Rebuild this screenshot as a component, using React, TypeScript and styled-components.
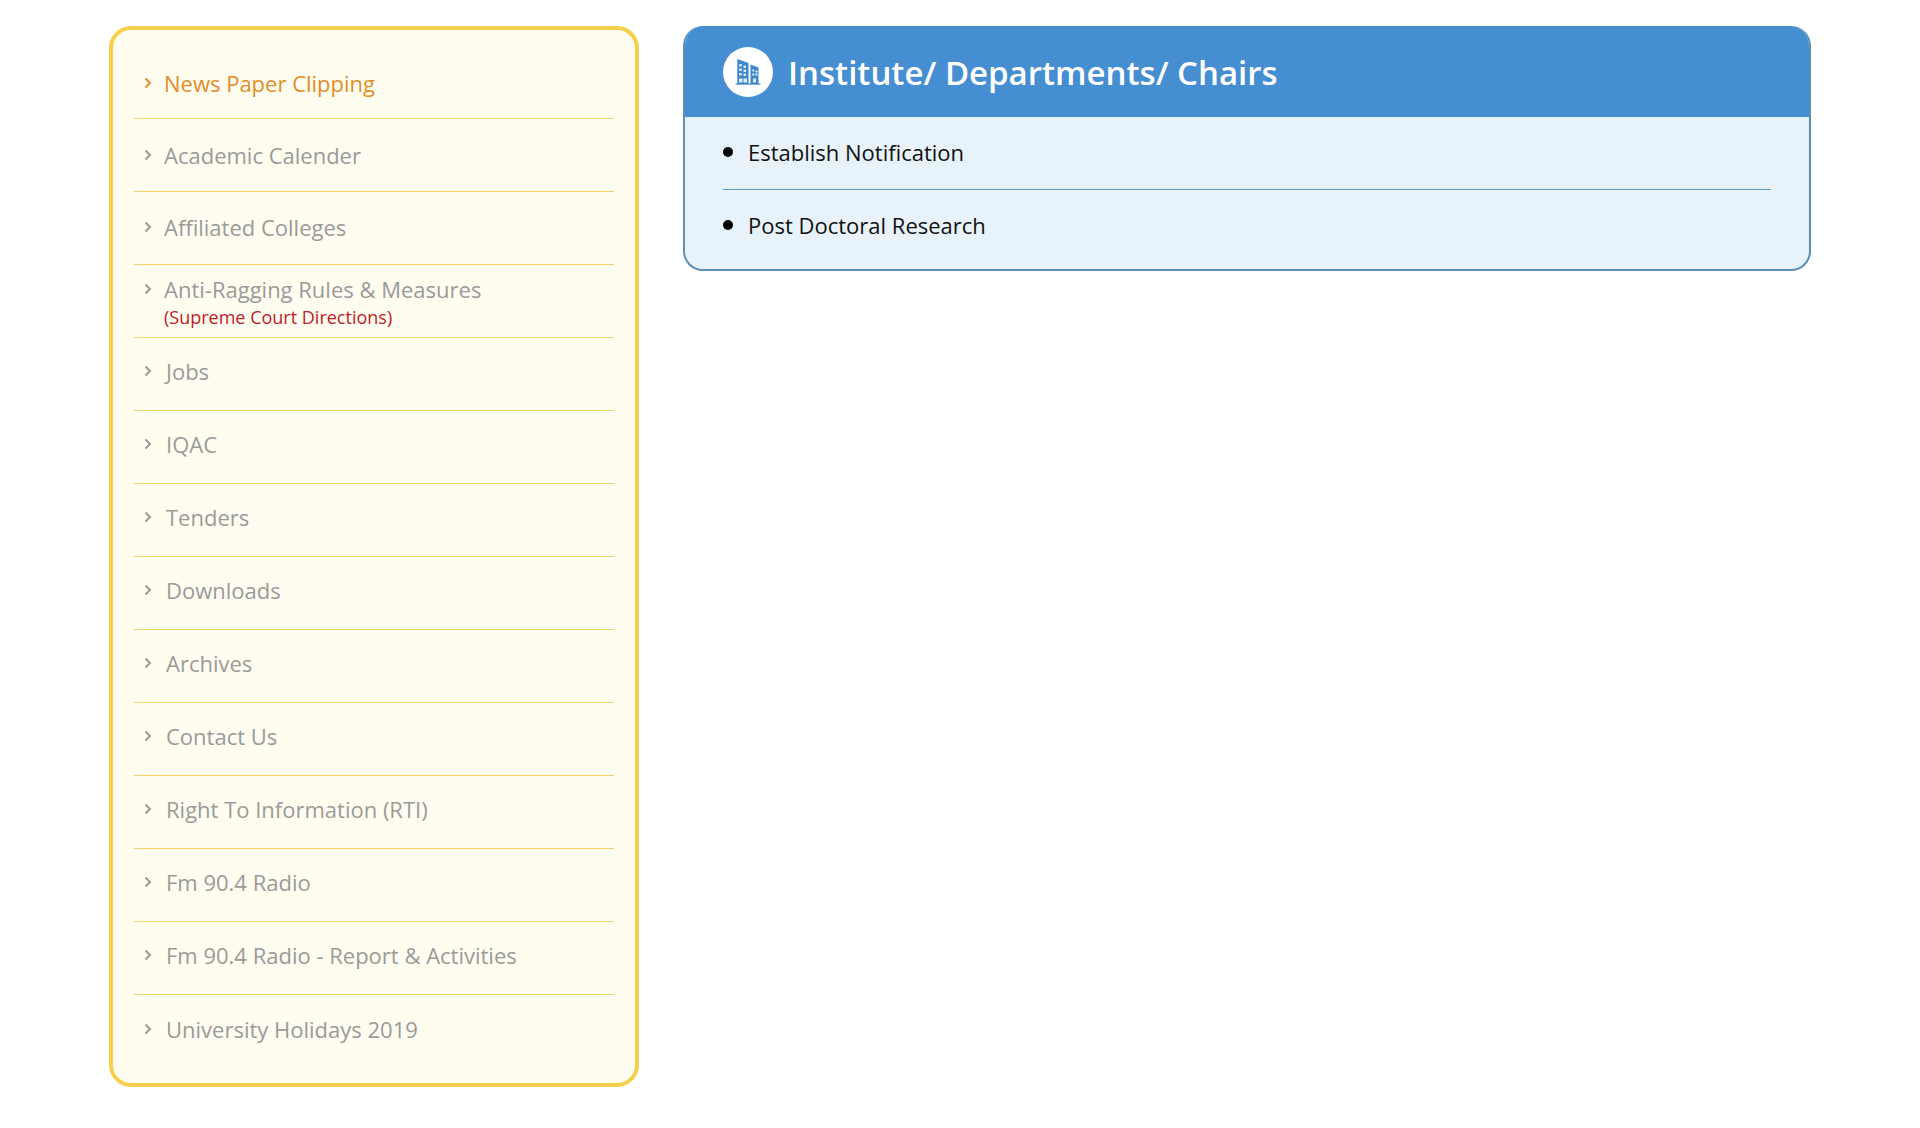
import React from "react";
import styled, { createGlobalStyle } from "styled-components";

const GlobalStyle = createGlobalStyle`
  html, body {
    margin: 0;
    padding: 0;
    background: #fff;
    font-family: "Open Sans", "Liberation Sans", sans-serif;
  }
`;

const links = [
  { label: "News Paper Clipping", active: true, tight: true, lift: 0 },
  { label: "Academic Calender", tight: true, lift: 1 },
  { label: "Affiliated Colleges", tight: true, lift: 2 },
  { label: "Anti-Ragging Rules & Measures", note: "(Supreme Court Directions)", tight: true, lift: 0 },
  { label: "Jobs", lift: 6 },
  { label: "IQAC", lift: 6 },
  { label: "Tenders", lift: 6 },
  { label: "Downloads", lift: 6 },
  { label: "Archives", lift: 6 },
  { label: "Contact Us", lift: 6 },
  { label: "Right To Information (RTI)", lift: 6 },
  { label: "Fm 90.4 Radio", lift: 6 },
  { label: "Fm 90.4 Radio - Report & Activities", lift: 6 },
  { label: "University Holidays 2019", lift: 6 },
];

const Chevron = () => (
  <ChevronIcon viewBox="0 0 8 12" aria-hidden="true">
    <path d="M1.500 1.500 6 6l-4.500 4.500" fill="none" stroke="currentColor" strokeWidth="2" />
  </ChevronIcon>
);

const BuildingIcon = () => (
  <svg width="30" height="30" viewBox="3.500 7 30 30" aria-hidden="true">
    <g fill="#3f87c8">
      <path d="M7.800 9 19 13v21H7.800z" />
      <path d="M21 14.500 29 17.500V34h-8z" />
      <rect x="6" y="33.500" width="25" height="1.200" />
    </g>
    <g fill="#dcebf7">
      <rect x="9.700" y="14" width="2.500" height="2.500" />
      <rect x="14" y="15.500" width="2.500" height="2.500" />
      <rect x="9.700" y="18.500" width="2.500" height="2.500" />
      <rect x="14" y="19.500" width="2.500" height="2.500" />
      <rect x="9.700" y="23" width="2.500" height="2.500" />
      <rect x="14" y="23.500" width="2.500" height="2.500" />
      <rect x="9.500" y="28.500" width="3.500" height="4" />
      <rect x="14" y="28.500" width="3.500" height="4" />
      <rect x="22.800" y="19.500" width="2" height="2" />
      <rect x="26" y="20.500" width="2" height="2" />
      <rect x="22.800" y="23.500" width="2" height="2" />
      <rect x="26" y="23.500" width="2" height="2" />
      <rect x="23.500" y="28.500" width="3" height="4" />
    </g>
  </svg>
);

export default function App() {
  return (
    <>
      <GlobalStyle />
      <Page>
        <Sidebar>
          <SideList>
            {links.map((link) => (
              <SideItem key={link.label} $active={link.active} $lift={link.lift}>
                <SideLine $tight={link.tight}>
                  <Chevron />
                  <SideLabel>{link.label}</SideLabel>
                </SideLine>
                {link.note && <SideNote>{link.note}</SideNote>}
              </SideItem>
            ))}
          </SideList>
        </Sidebar>
        <Panel>
          <PanelHeader>
            <IconCircle>
              <BuildingIcon />
            </IconCircle>
            <PanelTitle>Institute/ Departments/ Chairs</PanelTitle>
          </PanelHeader>
          <BulletList>
            <BulletItem>Establish Notification</BulletItem>
            <BulletItem>Post Doctoral Research</BulletItem>
          </BulletList>
        </Panel>
      </Page>
    </>
  );
}

const Page = styled.div`
  display: flex;
  align-items: flex-start;
  gap: 44px;
  width: 1702px;
  min-height: 1128px;
  box-sizing: border-box;
  margin-left: 109px;
  padding-top: 26px;
`;

const Sidebar = styled.aside`
  width: 530px;
  flex: none;
  box-sizing: border-box;
  height: 1061px;
  padding: 16px 21px 0;
  background: #fffdf0;
  border: 4px solid #f6cf4c;
  border-radius: 22px;
`;

const SideList = styled.ul`
  list-style: none;
  margin: 0;
  padding: 0;
`;

const SideItem = styled.li<{ $active?: boolean; $lift: number }>`
  display: flex;
  flex-direction: column;
  justify-content: center;
  height: 73px;
  box-sizing: border-box;
  padding-left: 10px;
  padding-bottom: ${(p) => p.$lift}px;
  border-bottom: 1px solid #efd364;
  color: ${(p) => (p.$active ? "#e28d28" : "#9a9a9a")};

  &:first-child {
    padding-top: 1px;
  }

  &:last-child {
    border-bottom: 0;
  }
`;

const SideLine = styled.div<{ $tight?: boolean }>`
  display: flex;
  align-items: center;
  gap: ${(p) => (p.$tight ? "12px" : "14px")};
`;

const ChevronIcon = styled.svg`
  width: 8px;
  height: 12px;
  flex: none;
`;

const SideLabel = styled.span`
  font-size: 22px;
  line-height: 30px;
`;

const SideNote = styled.span`
  margin: 1px 0 0 20px;
  font-size: 18px;
  line-height: 24px;
  color: #c0202a;
`;

const Panel = styled.section`
  flex: 1;
  border-radius: 20px;
  overflow: hidden;
  background: #e8f2fb;
  border: 2px solid #5b8fb5;
  border-top: 0;
  box-sizing: border-box;
`;

const PanelHeader = styled.header`
  display: flex;
  align-items: center;
  gap: 15px;
  height: 91px;
  margin: 0 -2px;
  padding-left: 40px;
  background: #468ed2;
`;

const IconCircle = styled.div`
  display: flex;
  align-items: center;
  justify-content: center;
  width: 50px;
  height: 50px;
  border-radius: 50%;
  background: #fff;
`;

const PanelTitle = styled.h2`
  margin: 2px 0 0;
  font-size: 33px;
  font-weight: 600;
  color: #fff;
`;

const BulletList = styled.ul`
  list-style: none;
  margin: 0;
  padding: 0 38px 29px;
`;

const BulletItem = styled.li`
  display: flex;
  align-items: center;
  gap: 15px;
  padding: 20px 0 22px;
  font-size: 22px;
  line-height: 30px;
  color: #111;

  &::before {
    content: "";
    width: 10px;
    height: 10px;
    border-radius: 50%;
    background: #000;
  }

  & + & {
    padding-bottom: 0;
    border-top: 1px solid #5a9fc8;
  }
`;
